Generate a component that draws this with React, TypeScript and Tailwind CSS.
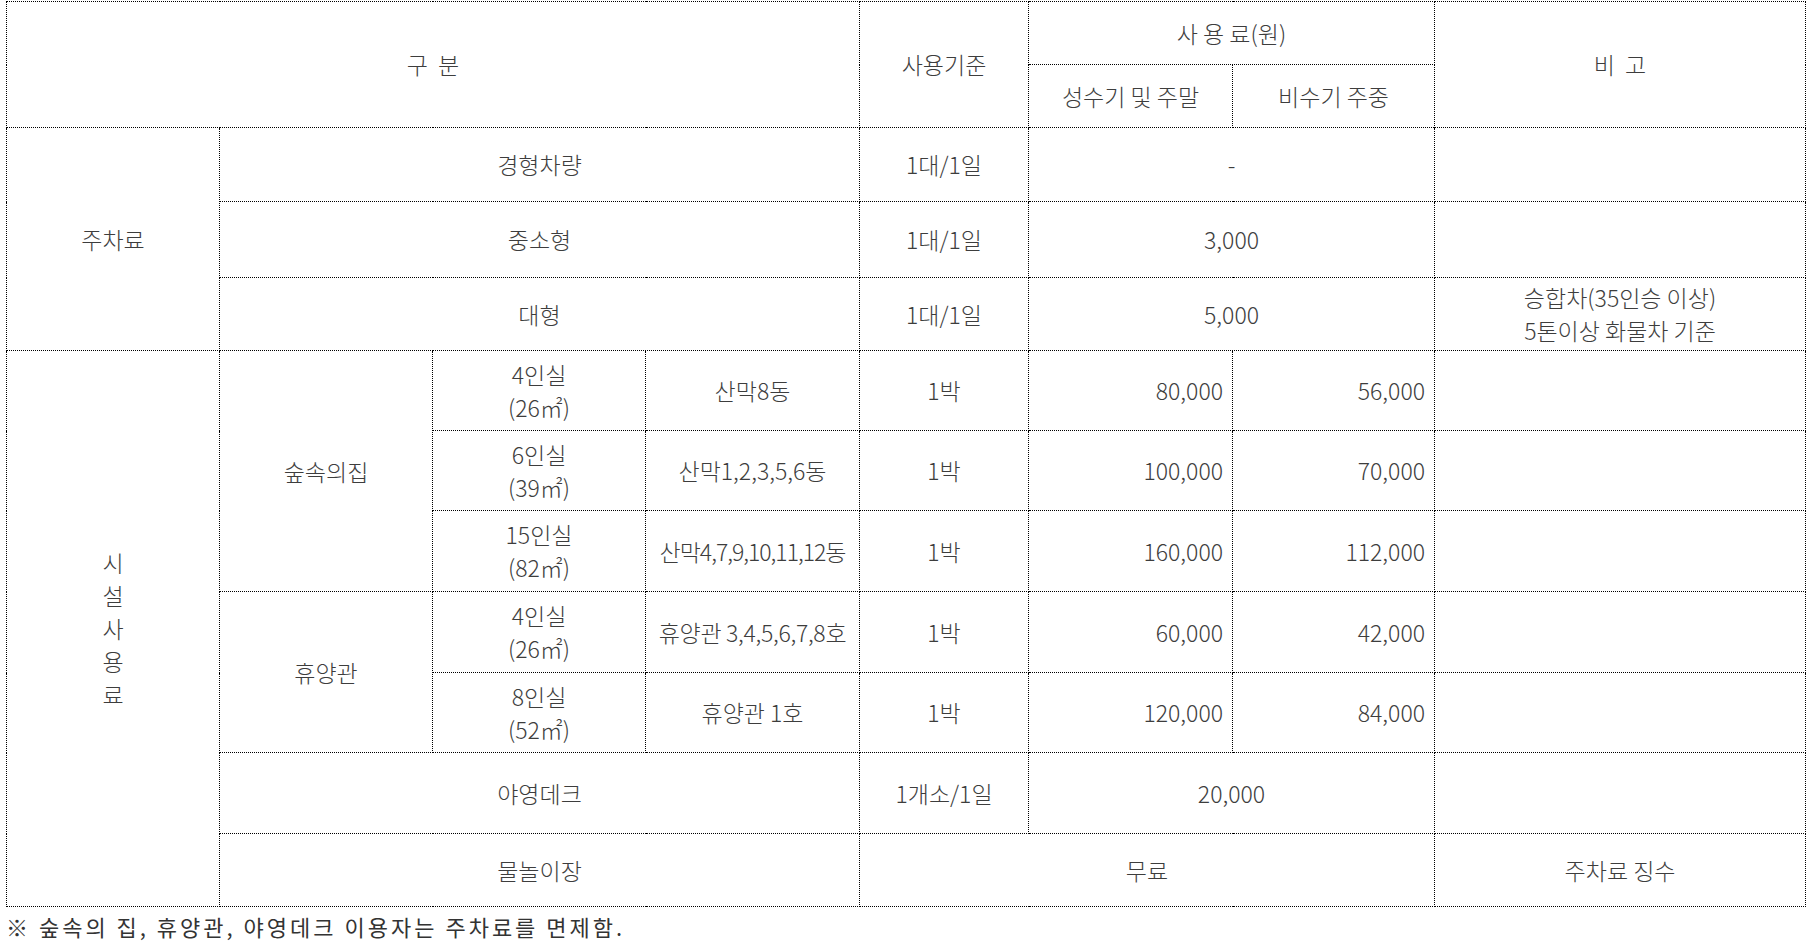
const cell = 'border border-dotted border-black text-center align-middle p-0'
const num = 'border border-dotted border-black text-right align-middle pr-[9px]'

function Two({ a, b }: { a: string; b: string }) {
  return (
    <div className="leading-[33px]">
      <div>{a}</div>
      <div>{b}</div>
    </div>
  )
}

interface Room {
  size: string
  area: string
  units: string
  track?: string
  peak: string
  off: string
}

const forest: Room[] = [
  { size: '4인실', area: '(26㎡)', units: '산막8동', peak: '80,000', off: '56,000' },
  { size: '6인실', area: '(39㎡)', units: '산막1,2,3,5,6동', peak: '100,000', off: '70,000' },
  { size: '15인실', area: '(82㎡)', units: '산막4,7,9,10,11,12동', track: 'tracking-[-1px]', peak: '160,000', off: '112,000' },
]

const lodge: Room[] = [
  { size: '4인실', area: '(26㎡)', units: '휴양관 3,4,5,6,7,8호', track: 'tracking-[-0.3px]', peak: '60,000', off: '42,000' },
  { size: '8인실', area: '(52㎡)', units: '휴양관 1호', peak: '120,000', off: '84,000' },
]

const heights = ['h-[80px]', 'h-[80px]', 'h-[81px]', 'h-[81px]', 'h-[80px]']

export default function App() {
  return (
    <div
      className="bg-white min-h-screen pl-[6px] pt-[1px] text-[23px] text-[#3d3d3d]"
      style={{ fontFamily: '"Noto Sans CJK KR", "Noto Sans", sans-serif' }}
    >
      <table className="table-fixed border-collapse w-[1799px] font-light">
        <colgroup>
          <col className="w-[213px]" />
          <col className="w-[213px]" />
          <col className="w-[213px]" />
          <col className="w-[214px]" />
          <col className="w-[169px]" />
          <col className="w-[204px]" />
          <col className="w-[202px]" />
          <col className="w-[371px]" />
        </colgroup>
        <thead>
          <tr className="h-[63px]">
            <th colSpan={4} rowSpan={2} className={`${cell} font-light`}>구&nbsp; 분</th>
            <th rowSpan={2} className={`${cell} font-light`}>사용기준</th>
            <th colSpan={2} className={`${cell} font-light`}>사 용 료(원)</th>
            <th rowSpan={2} className={`${cell} font-light`}>비&nbsp; 고</th>
          </tr>
          <tr className="h-[63px]">
            <th className={`${cell} font-light`}>성수기 및 주말</th>
            <th className={`${cell} font-light`}>비수기 주중</th>
          </tr>
        </thead>
        <tbody>
          <tr className="h-[74px]">
            <td rowSpan={3} className={cell}>주차료</td>
            <td colSpan={3} className={cell}>경형차량</td>
            <td className={cell}>1대/1일</td>
            <td colSpan={2} className={cell}>-</td>
            <td className={cell}></td>
          </tr>
          <tr className="h-[76px]">
            <td colSpan={3} className={cell}>중소형</td>
            <td className={cell}>1대/1일</td>
            <td colSpan={2} className={cell}>3,000</td>
            <td className={cell}></td>
          </tr>
          <tr className="h-[73px]">
            <td colSpan={3} className={cell}>대형</td>
            <td className={cell}>1대/1일</td>
            <td colSpan={2} className={cell}>5,000</td>
            <td className={cell}>
              <Two a="승합차(35인승 이상)" b="5톤이상 화물차 기준" />
            </td>
          </tr>
          {[...forest, ...lodge].map((r, i) => (
            <tr key={i} className={heights[i]}>
              {i === 0 && (
                <td rowSpan={7} className={cell}>
                  <div className="flex flex-col items-center leading-[33px]">
                    {'시설사용료'.split('').map((c) => (
                      <span key={c}>{c}</span>
                    ))}
                  </div>
                </td>
              )}
              {i === 0 && <td rowSpan={3} className={cell}>숲속의집</td>}
              {i === 3 && <td rowSpan={2} className={cell}>휴양관</td>}
              <td className={cell}>
                <Two a={r.size} b={r.area} />
              </td>
              <td className={`${cell} ${r.track ?? ''}`}>{r.units}</td>
              <td className={cell}>1박</td>
              <td className={num}>{r.peak}</td>
              <td className={num}>{r.off}</td>
              <td className={cell}></td>
            </tr>
          ))}
          <tr className="h-[81px]">
            <td colSpan={3} className={cell}>야영데크</td>
            <td className={cell}>1개소/1일</td>
            <td colSpan={2} className={cell}>20,000</td>
            <td className={cell}></td>
          </tr>
          <tr className="h-[73px]">
            <td colSpan={3} className={cell}>물놀이장</td>
            <td colSpan={3} className={cell}>무료</td>
            <td className={cell}>주차료 징수</td>
          </tr>
        </tbody>
      </table>
      <p className="mt-[5px] text-[22px] leading-[28px] tracking-[3px] text-[#333]">※ 숲속의 집, 휴양관, 야영데크 이용자는 주차료를 면제함.</p>
    </div>
  )
}
